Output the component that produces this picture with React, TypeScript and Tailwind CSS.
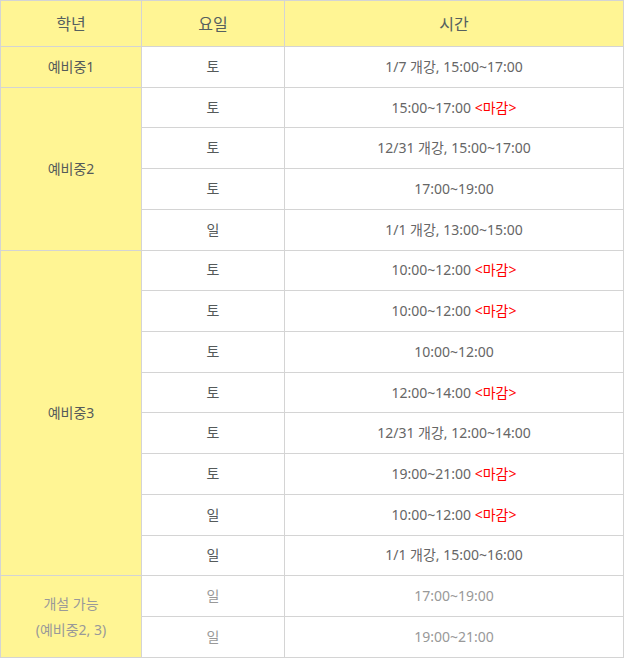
import React from 'react';

type Row = { day: string; time: string; closed?: boolean };
type Group = { grade: React.ReactNode; rows: Row[]; muted?: boolean };

const GROUPS: Group[] = [
  { grade: '예비중1', rows: [{ day: '토', time: '1/7 개강, 15:00~17:00' }] },
  {
    grade: '예비중2',
    rows: [
      { day: '토', time: '15:00~17:00', closed: true },
      { day: '토', time: '12/31 개강, 15:00~17:00' },
      { day: '토', time: '17:00~19:00' },
      { day: '일', time: '1/1 개강, 13:00~15:00' },
    ],
  },
  {
    grade: '예비중3',
    rows: [
      { day: '토', time: '10:00~12:00', closed: true },
      { day: '토', time: '10:00~12:00', closed: true },
      { day: '토', time: '10:00~12:00' },
      { day: '토', time: '12:00~14:00', closed: true },
      { day: '토', time: '12/31 개강, 12:00~14:00' },
      { day: '토', time: '19:00~21:00', closed: true },
      { day: '일', time: '10:00~12:00', closed: true },
      { day: '일', time: '1/1 개강, 15:00~16:00' },
    ],
  },
  {
    grade: (
      <>
        개설 가능
        <br />
        (예비중2, 3)
      </>
    ),
    muted: true,
    rows: [
      { day: '일', time: '17:00~19:00' },
      { day: '일', time: '19:00~21:00' },
    ],
  },
];

const cell = 'border border-[#d4d4d4] text-center align-middle p-0';

export default function App() {
  return (
    <div
      className="w-[624px] bg-white"
      style={{ fontFamily: '"Noto Sans", "Noto Sans CJK KR", sans-serif' }}
    >
      <table className="w-[624px] border-collapse table-fixed text-[14px] leading-[20px]">
        <colgroup>
          <col className="w-[141px]" />
          <col className="w-[143px]" />
          <col />
        </colgroup>
        <thead>
          <tr className="h-[46px] bg-[#fff594] text-[#556060] text-[16px]">
            <th className={`${cell} font-normal`}>학년</th>
            <th className={`${cell} font-normal`}>요일</th>
            <th className={`${cell} font-normal`}>시간</th>
          </tr>
        </thead>
        <tbody>
          {GROUPS.map((g, gi) =>
            g.rows.map((r, ri) => (
              <tr key={`${gi}-${ri}`} className="h-[40.73px]">
                {ri === 0 && (
                  <td
                    rowSpan={g.rows.length}
                    className={`${cell} bg-[#fff594] ${g.muted ? 'text-[#999999] leading-[26px]' : 'text-[#555a5a]'}`}
                  >
                    {g.grade}
                  </td>
                )}
                <td className={`${cell} ${g.muted ? 'text-[#999999]' : 'text-[#555a5a]'}`}>{r.day}</td>
                <td className={`${cell} ${g.muted ? 'text-[#999999]' : 'text-[#666666]'}`}>
                  {r.time}
                  {r.closed && <span className="text-[#ff0000]"> &lt;마감&gt;</span>}
                </td>
              </tr>
            ))
          )}
        </tbody>
      </table>
    </div>
  );
}
